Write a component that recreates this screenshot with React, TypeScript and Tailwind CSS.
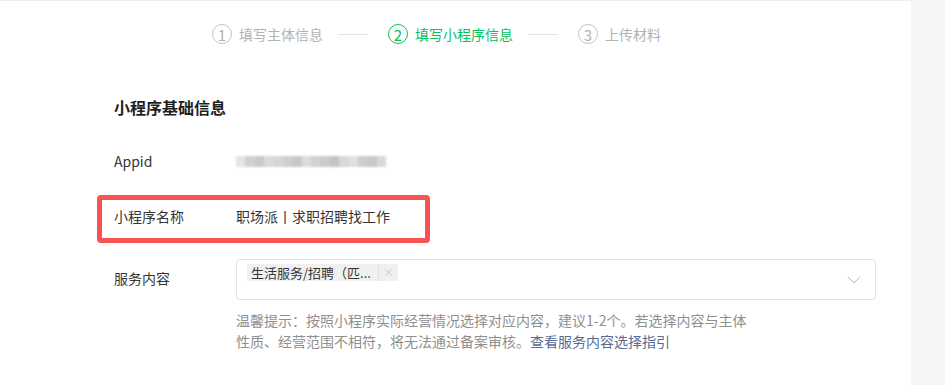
import { ChevronDown, X } from 'lucide-react';

const steps = [
  { no: 1, label: '填写主体信息', state: 'done' },
  { no: 2, label: '填写小程序信息', state: 'active' },
  { no: 3, label: '上传材料', state: 'todo' },
];

// blurred appid placeholder blocks
const blurBlocks = [
  '#e4e4e4', '#d0d0d0', '#c9c9c9', '#dadada', '#d6d6d6', '#cfcfcf', '#c7c7c7', '#dcdcdc',
  '#d2d2d2', '#cbcbcb', '#c4c4c4', '#d8d8d8', '#e0e0e0', '#cdcdcd', '#c8c8c8', '#d9d9d9',
];

export default function App() {
  return (
    <div className="flex h-[385px] w-[945px] overflow-hidden bg-[#f5f5f5] font-['Noto_Sans_CJK_SC','Noto_Sans',sans-serif] text-[14px] text-[#353535]">
      <div className="flex h-full w-[911px] flex-col border-t border-[#eeeeee] bg-white">
        {/* stepper */}
        <div className="mt-[23px] flex h-5 items-center pl-[212px]">
          {steps.map((s, i) => {
            const active = s.state === 'active';
            return (
              <div key={s.no} className="flex items-center">
                <div
                  className={
                    active
                      ? 'flex h-5 w-5 items-center justify-center rounded-full border-[1.5px] border-[#07c160] text-[15px] leading-none text-[#07c160]'
                      : 'flex h-5 w-5 items-center justify-center rounded-full border border-[#c4c4c4] text-[15px] leading-none text-[#b2b2b2]'
                  }
                >
                  {s.no}
                </div>
                <span className={active ? 'ml-[7px] text-[14px] text-[#07c160]' : 'ml-[7px] text-[14px] text-[#b2b2b2]'}>{s.label}</span>
                {i < steps.length - 1 && <div className="ml-[15px] mr-5 h-px w-[30px] bg-[#e2e2e2]" />}
              </div>
            );
          })}
        </div>

        <div className="flex flex-col pl-[114px]">
          <h2 className="mt-[51px] h-6 text-[16px] font-semibold leading-6 text-[#1f1f1f]">小程序基础信息</h2>

          {/* appid */}
          <div className="mt-[31px] flex h-[22px] items-center">
            <span className="w-[122px]">Appid</span>
            <div className="flex h-[11px] w-[150px] overflow-hidden blur-[1px]">
              {blurBlocks.map((c, i) => (
                <div key={i} className="h-full flex-1" style={{ background: c }} />
              ))}
            </div>
          </div>

          {/* name with annotation */}
          <div className="relative mt-[33px] flex h-[22px] items-center">
            <span className="w-[122px]">小程序名称</span>
            <span>职场派丨求职招聘找工作</span>
            <div className="absolute left-[-17px] top-[-10px] h-[48px] w-[333px] rounded-[4px] border-[5px] border-[#f65452]" />
          </div>

          {/* service content */}
          <div className="mt-[32px] flex items-start">
            <span className="w-[122px] pt-[8px] leading-[22px]">服务内容</span>
            <div className="flex flex-col">
              <div className="flex h-[41px] w-[640px] items-start justify-between rounded-[4px] border border-[#e3e3e3] pl-[10px] pr-[9px] pt-[4px]">
                <div className="flex h-[17px] items-center bg-[#f0f0f0] pl-[4px] text-[13px] leading-[17px] text-[#353535]">
                  <span>生活服务/招聘（匹...</span>
                  <span className="ml-[7px] h-[17px] w-px bg-[#e2e2e2]" />
                  <X className="mx-[4px] h-[11px] w-[11px] text-[#b5b5b5]" strokeWidth={1.5} />
                </div>
                <ChevronDown className="mt-[4px] h-[24px] w-[24px] text-[#b8b8b8]" strokeWidth={1} />
              </div>
              <div className="mt-[10px] flex flex-col text-[14px] leading-[21px] text-[#8f8f8f]">
                <span>温馨提示：按照小程序实际经营情况选择对应内容，建议1-2个。若选择内容与主体</span>
                <div className="flex">
                  <span>性质、经营范围不相符，将无法通过备案审核。</span>
                  <span className="text-[#576b95]">查看服务内容选择指引</span>
                </div>
              </div>
            </div>
          </div>
        </div>
      </div>
    </div>
  );
}
